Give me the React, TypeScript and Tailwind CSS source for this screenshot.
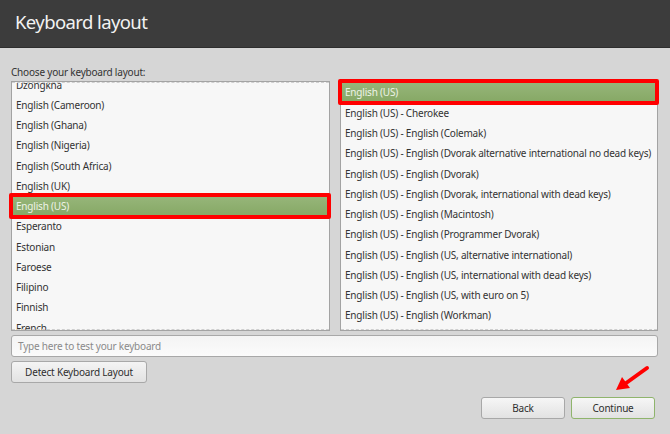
import React from "react";

const leftItems = [
  "Dzongkha",
  "English (Cameroon)",
  "English (Ghana)",
  "English (Nigeria)",
  "English (South Africa)",
  "English (UK)",
  "English (US)",
  "Esperanto",
  "Estonian",
  "Faroese",
  "Filipino",
  "Finnish",
  "French",
];

const rightItems = [
  "English (US)",
  "English (US) - Cherokee",
  "English (US) - English (Colemak)",
  "English (US) - English (Dvorak alternative international no dead keys)",
  "English (US) - English (Dvorak)",
  "English (US) - English (Dvorak, international with dead keys)",
  "English (US) - English (Macintosh)",
  "English (US) - English (Programmer Dvorak)",
  "English (US) - English (US, alternative international)",
  "English (US) - English (US, international with dead keys)",
  "English (US) - English (US, with euro on 5)",
  "English (US) - English (Workman)",
];

function Row({ label, selected }: { label: string; selected: boolean }) {
  return (
    <div
      className={`relative h-[20.25px] shrink-0 flex items-center px-[4px] whitespace-nowrap ${
        selected ? "bg-gradient-to-b from-[#97b67a] to-[#86a865] text-[#eef3e8]" : "text-[#333333]"
      }`}
    >
      {label}
      {selected && (
        <div className="absolute -left-[3px] -right-[2px] -top-[3px] -bottom-[3px] border-4 border-[#ff0000] rounded-[2px]" />
      )}
    </div>
  );
}

export default function App() {
  return (
    <div
      className="w-[670px] h-[434px] bg-[#d6d6d6] flex flex-col text-[10px] tracking-[-0.2px] relative overflow-hidden"
      style={{ fontFamily: '"Noto Sans", "Open Sans", sans-serif' }}
    >
      <div className="h-[48px] shrink-0 bg-[#3c3c3c] border-b border-[#2e2e2e] flex items-center px-[15px]">
        <h1 className="text-[18.5px] tracking-[-0.6px] text-[#f2f2f2] leading-none -mt-[2px]">Keyboard layout</h1>
      </div>

      <div className="flex flex-col pl-[11px] pr-[12px]">
        <p className="mt-[16px] h-[17px] leading-[17px] text-[#333333]">Choose your keyboard layout:</p>

        <div className="flex gap-[10px]">
          <div className="w-[319px] h-[250px] bg-[#f7f7f7] border border-[#a3a3a3] relative">
            <div className="absolute inset-0 overflow-hidden border-t border-dashed border-[#cfcfcf]">
              <div className="flex flex-col -mt-[8px]">
                {leftItems.map((l) => (
                  <Row key={l} label={l} selected={false} />
                ))}
              </div>
            </div>
            <div className="absolute left-0 right-0 top-[114px] flex flex-col">
              <Row label="English (US)" selected />
            </div>
            <div className="absolute left-0 right-0 bottom-0 border-b border-dashed border-[#cfcfcf]" />
          </div>

          <div className="w-[318px] h-[250px] bg-[#f7f7f7] border border-[#a3a3a3] relative">
            <div className="absolute inset-0 overflow-hidden">
              <div className="flex flex-col pt-[1px]">
                {rightItems.map((l) => (
                  <Row key={l} label={l} selected={false} />
                ))}
              </div>
              <div className="absolute left-0 right-0 bottom-0 border-b border-dashed border-[#cfcfcf]" />
            </div>
            <div className="absolute left-0 right-0 top-0 flex flex-col">
              <Row label="English (US)" selected />
            </div>
          </div>
        </div>

        <div className="mt-[4px] h-[22px] rounded-[3px] border border-[#a8a8a8] bg-gradient-to-b from-[#f4f4f4] to-[#fbfbfb] flex items-center px-[6px] text-[#8a8a8a]">
          Type here to test your keyboard
        </div>

        <div className="mt-[4px] w-[136px] h-[22px] rounded-[3px] border border-[#a8a8a8] bg-gradient-to-b from-[#f4f4f4] to-[#e2e2e2] flex items-center justify-center text-[#2e2e2e]">
          Detect Keyboard Layout
        </div>

        <div className="mt-[14px] flex justify-end gap-[6px] pr-[3px]">
          <div className="w-[84px] h-[22px] rounded-[3px] border border-[#a8a8a8] bg-gradient-to-b from-[#f6f6f6] to-[#e2e2e2] flex items-center justify-center text-[#2e2e2e]">
            Back
          </div>
          <div className="w-[84px] h-[22px] rounded-[3px] border border-[#8fb46c] bg-gradient-to-b from-[#f6f6f6] to-[#e2e2e2] flex items-center justify-center text-[#2e2e2e]">
            Continue
          </div>
        </div>
      </div>

      <svg className="absolute left-[608px] top-[360px]" width="48" height="36" viewBox="0 0 48 36">
        <line x1="39" y1="8" x2="14" y2="26" stroke="#ff0000" strokeWidth="4" strokeLinecap="round" />
        <polygon points="8,30 14,17 22,28" fill="#ff0000" />
      </svg>
    </div>
  );
}
